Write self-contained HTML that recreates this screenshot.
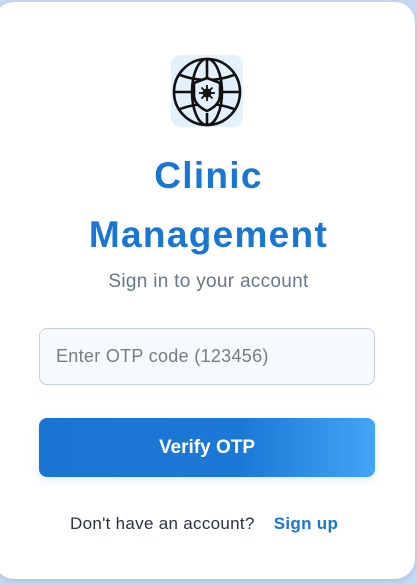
<!DOCTYPE html>
<html><head><style>
html,body{margin:0;padding:0;width:417px;height:585px;overflow:hidden;background:#c6d9f1;font-family:"Liberation Sans",sans-serif}
.card{position:absolute;left:-6px;top:2px;width:421px;height:577px;background:#fff;border-radius:20px;box-shadow:0 2px 6px rgba(80,120,180,.25)}
.icon{position:absolute;left:171px;top:55px;width:72px;height:72px;background:#e3f0fd;border-radius:10px}
.t{position:absolute;left:0;width:417px;text-align:center;color:#1976d2;font-weight:bold;font-size:37px;letter-spacing:1.3px}
.sub{position:absolute;left:0;width:417px;top:271px;text-align:center;color:#66788a;font-size:19px;letter-spacing:0.3px}
.inp{position:absolute;left:39px;top:328px;width:334px;height:55px;border:1px solid #c3cfdd;border-radius:8px;background:#f6faff;box-sizing:content-box}
.inp span{position:absolute;left:16px;top:17px;font-size:18px;color:#767c84;letter-spacing:0.3px}
.btn{position:absolute;left:39px;top:418px;width:336px;height:59px;border-radius:8px;background:linear-gradient(90deg,#1a74d2 0%,#1c78d6 60%,#42a5f5 100%);color:#fff;font-weight:bold;font-size:19px;text-align:center;line-height:59px;box-shadow:0 3px 8px rgba(25,118,210,.15)}
.ft{position:absolute;top:514px;left:70px;font-size:17px;color:#2a3340;letter-spacing:0.3px}
.ft b{color:#1976d2;margin-left:14px}
</style></head><body>
<div class="card"></div>
<div class="icon">
<svg width="72" height="72" viewBox="0 0 72 72" fill="none" stroke="#111" stroke-width="2.6">
<circle cx="36" cy="37" r="33"/>
<ellipse cx="36" cy="37" rx="15" ry="33"/>
<line x1="36" y1="4" x2="36" y2="26"/><line x1="36" y1="58" x2="36" y2="70"/>
<line x1="3" y1="37" x2="23" y2="37"/><line x1="49" y1="37" x2="69" y2="37"/>
<path d="M9 20 Q36 30 63 20"/><path d="M9 54 Q36 44 63 54"/>
<path d="M36 23 L49 28 V40 Q49 50 36 56 Q23 50 23 40 V28 Z" fill="#e3f0fd"/>
<circle cx="36" cy="38" r="4.5" fill="#111" stroke="none"/>
<g stroke-width="1.8"><line x1="36" y1="30" x2="36" y2="46"/><line x1="28" y1="38" x2="44" y2="38"/><line x1="30.5" y1="32.5" x2="41.5" y2="43.5"/><line x1="41.5" y1="32.5" x2="30.5" y2="43.5"/></g>
</svg></div>
<div class="t" style="top:155px">Clinic</div>
<div class="t" style="top:214px">Management</div>
<div class="sub">Sign in to your account</div>
<div class="inp"><span>Enter OTP code (123456)</span></div>
<div class="btn">Verify OTP</div>
<div class="ft">Don't have an account? <b>Sign up</b></div>
</body></html>
